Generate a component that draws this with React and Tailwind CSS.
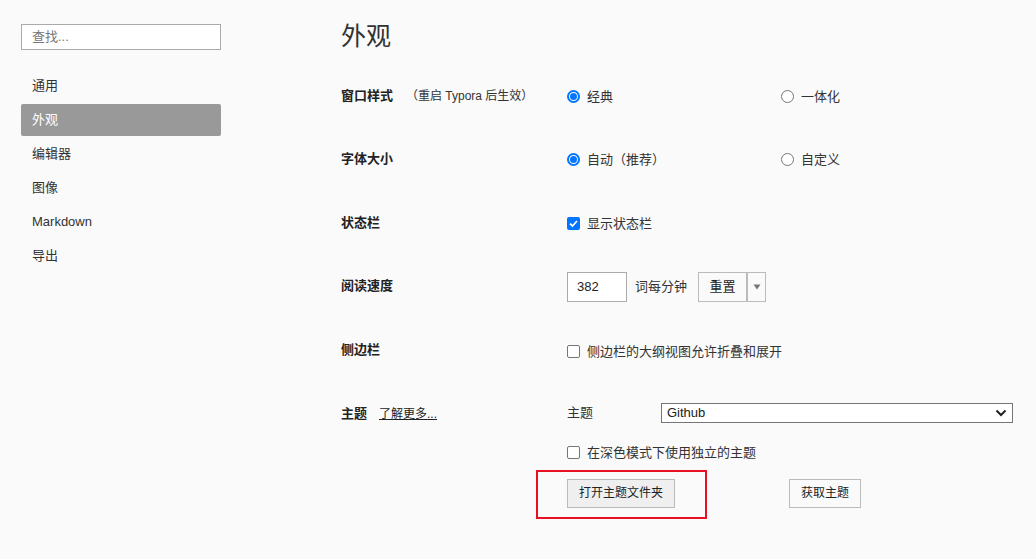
import React from "react";

const font = { fontFamily: '"Liberation Sans", "Noto Sans CJK SC", sans-serif' };

function Radio({ checked }) {
  return checked ? (
    <span className="w-[13px] h-[13px] rounded-full border-[2px] border-[#0075ff] flex items-center justify-center bg-white">
      <span className="w-[7px] h-[7px] rounded-full bg-[#0075ff]" />
    </span>
  ) : (
    <span className="w-[13px] h-[13px] rounded-full border border-[#767676] bg-white" />
  );
}

function Check({ checked }) {
  return checked ? (
    <span className="w-[13px] h-[13px] rounded-[2px] bg-[#0075ff] flex items-center justify-center">
      <svg width="11" height="11" viewBox="0 0 11 11">
        <path d="M2 5.6 L4.5 8 L9 3" fill="none" stroke="white" strokeWidth="1.8" />
      </svg>
    </span>
  ) : (
    <span className="w-[13px] h-[13px] rounded-[2px] border border-[#767676] bg-white" />
  );
}

export default function App() {
  const nav = ["通用", "外观", "编辑器", "图像", "Markdown", "导出"];
  return (
    <div className="w-[1036px] h-[559px] bg-[#fafafa] flex text-[13px] text-[#333] overflow-hidden" style={font}>
      <div className="w-[341px] pl-[21px] pt-[24px] shrink-0">
        <div className="w-[200px] h-[26px] border border-[#aaa] bg-white flex items-center pl-[10px] text-[#777]">查找...</div>
        <div className="mt-[20px] flex flex-col gap-[2px] w-[200px]">
          {nav.map((n) => (
            <div
              key={n}
              className={
                "h-[32px] flex items-center pl-[11px] rounded-[2px] " +
                (n === "外观" ? "bg-[#999] text-white" : "text-[#333]")
              }
            >
              {n}
            </div>
          ))}
        </div>
      </div>
      <div className="flex-1 flex flex-col pr-[23px]">
        <div className="h-[63px] flex items-center pt-[11px] text-[25px] text-[#333]">外观</div>
        <div className="h-[64px] flex items-start pt-[23px]">
          <div className="w-[226px] flex items-center">
            <span className="font-bold text-[#222]">窗口样式</span>
            <span className="ml-[13px] text-[12px] text-[#333]">（重启 Typora 后生效）</span>
          </div>
          <div className="w-[214px] flex items-center gap-[7px] pt-[1px]">
            <Radio checked />
            <span>经典</span>
          </div>
          <div className="flex items-center gap-[7px] pt-[1px]">
            <Radio />
            <span>一体化</span>
          </div>
        </div>
        <div className="h-[64px] flex items-start pt-[22px]">
          <div className="w-[226px] font-bold text-[#222]">字体大小</div>
          <div className="w-[214px] flex items-center gap-[7px] pt-[1px]">
            <Radio checked />
            <span>自动（推荐）</span>
          </div>
          <div className="flex items-center gap-[7px] pt-[1px]">
            <Radio />
            <span>自定义</span>
          </div>
        </div>
        <div className="h-[64px] flex items-start pt-[22px]">
          <div className="w-[226px] font-bold text-[#222]">状态栏</div>
          <div className="flex items-center gap-[7px] pt-[1px]">
            <Check checked />
            <span>显示状态栏</span>
          </div>
        </div>
        <div className="h-[64px] flex items-center">
          <div className="w-[226px] font-bold text-[#222] pb-[2px]">阅读速度</div>
          <div className="flex items-center">
            <div className="w-[60px] h-[30px] border border-[#aaa] bg-white flex items-center pl-[9px] text-[#222]">382</div>
            <span className="ml-[8px]">词每分钟</span>
            <div className="ml-[11px] h-[30px] flex border border-[#bbb] bg-[#fafafa]">
              <span className="w-[47px] flex items-center justify-center text-[#222]">重置</span>
              <span className="w-[2px] bg-[#bbb]" />
              <span className="w-[17px] flex items-center justify-center">
                <svg width="8" height="6" viewBox="0 0 8 6">
                  <path d="M0.5 0.5 L7.5 0.5 L4 5.5 Z" fill="#777" />
                </svg>
              </span>
            </div>
          </div>
        </div>
        <div className="h-[64px] flex items-start pt-[21px]">
          <div className="w-[226px] font-bold text-[#222]">侧边栏</div>
          <div className="flex items-center gap-[7px] pt-[2px]">
            <Check />
            <span>侧边栏的大纲视图允许折叠和展开</span>
          </div>
        </div>
        <div className="flex items-start pt-[20px]">
          <div className="w-[226px] flex items-center pt-[1px]">
            <span className="font-bold text-[#222]">主题</span>
            <span className="ml-[12px] underline text-[12px] text-[#222]">了解更多...</span>
          </div>
          <div className="flex-1 flex flex-col">
            <div className="flex items-center">
              <span className="w-[94px]">主题</span>
              <div className="flex-1 h-[20px] border border-[#767676] bg-white flex items-center justify-between pl-[5px] pr-[5px] text-[#222]">
                <span>Github</span>
                <svg width="12" height="8" viewBox="0 0 12 8">
                  <path d="M1.5 1.5 L6 6 L10.5 1.5" fill="none" stroke="#222" strokeWidth="2" />
                </svg>
              </div>
            </div>
            <div className="flex items-center gap-[7px] mt-[20px]">
              <Check />
              <span>在深色模式下使用独立的主题</span>
            </div>
            <div className="flex items-center mt-[16px]">
              <div className="relative w-[222px]">
                <div className="w-[108px] h-[29px] border border-[#bbb] bg-[#efefef] flex items-center justify-center text-[12px] text-[#222]">
                  打开主题文件夹
                </div>
                <div className="absolute left-[-31px] top-[-9px] w-[171px] h-[49px] border-[2px] border-[#e81123]" />
              </div>
              <div className="w-[72px] h-[29px] border border-[#bbb] bg-[#fafafa] flex items-center justify-center text-[12px] text-[#222]">
                获取主题
              </div>
            </div>
          </div>
        </div>
      </div>
    </div>
  );
}
